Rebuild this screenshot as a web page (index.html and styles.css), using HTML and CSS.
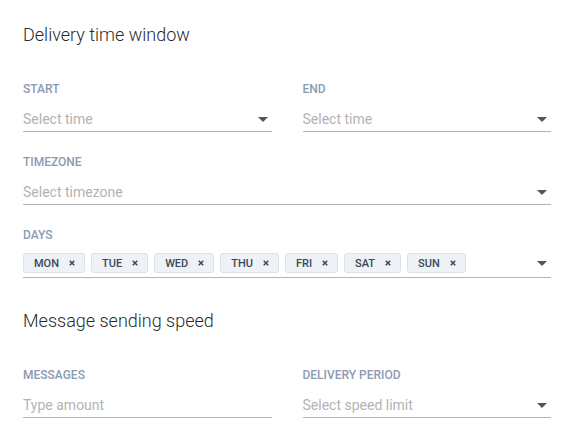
FILE: index.html
```html
<!DOCTYPE html>
<html>
<head>
<meta charset="utf-8">
<link rel="stylesheet" href="styles.css">
</head>
<body>
<div class="page">
  <h2 class="section-title">Delivery time window</h2>
  <div class="row two">
    <div class="field">
      <div class="label">Start</div>
      <div class="control select"><span class="placeholder">Select time</span><span class="caret"></span></div>
    </div>
    <div class="field">
      <div class="label">End</div>
      <div class="control select"><span class="placeholder">Select time</span><span class="caret"></span></div>
    </div>
  </div>
  <div class="row">
    <div class="field">
      <div class="label">Timezone</div>
      <div class="control select"><span class="placeholder">Select timezone</span><span class="caret"></span></div>
    </div>
  </div>
  <div class="row">
    <div class="field">
      <div class="label days-label">Days</div>
      <div class="control chips-control">
        <div class="chips">
          <span class="chip">MON<svg class="x" viewBox="0 0 8 8"><path d="M1 1L7 7M7 1L1 7"/></svg></span>
          <span class="chip">TUE<svg class="x" viewBox="0 0 8 8"><path d="M1 1L7 7M7 1L1 7"/></svg></span>
          <span class="chip">WED<svg class="x" viewBox="0 0 8 8"><path d="M1 1L7 7M7 1L1 7"/></svg></span>
          <span class="chip">THU<svg class="x" viewBox="0 0 8 8"><path d="M1 1L7 7M7 1L1 7"/></svg></span>
          <span class="chip">FRI<svg class="x" viewBox="0 0 8 8"><path d="M1 1L7 7M7 1L1 7"/></svg></span>
          <span class="chip">SAT<svg class="x" viewBox="0 0 8 8"><path d="M1 1L7 7M7 1L1 7"/></svg></span>
          <span class="chip">SUN<svg class="x" viewBox="0 0 8 8"><path d="M1 1L7 7M7 1L1 7"/></svg></span>
        </div>
        <span class="caret"></span>
      </div>
    </div>
  </div>
  <h2 class="section-title second">Message sending speed</h2>
  <div class="row two">
    <div class="field">
      <div class="label">Messages</div>
      <div class="control"><span class="placeholder">Type amount</span></div>
    </div>
    <div class="field">
      <div class="label">Delivery period</div>
      <div class="control select"><span class="placeholder">Select speed limit</span><span class="caret"></span></div>
    </div>
  </div>
</div>
</body>
</html>
```

FILE: styles.css
```css
html, body {
  margin: 0;
  padding: 0;
  background: #ffffff;
}
body {
  font-family: Roboto, "Liberation Sans", sans-serif;
}
.page {
  padding: 25px 29px 0 23px;
}
.section-title {
  margin: 0 0 38px 0;
  font-size: 18px;
  line-height: 20px;
  font-weight: 300;
  color: #2a2a2a;
}
.section-title.second {
  margin-top: 33px;
}
.row {
  display: flex;
  gap: 31px;
  margin-bottom: 24px;
}
.row.two .field {
  flex: 1 1 0;
}
.field {
  flex: 1 1 auto;
  min-width: 0;
}
.label {
  font-size: 12px;
  line-height: 13px;
  font-weight: 500;
  color: #8a9bb1;
  text-transform: uppercase;
  margin-bottom: 13px;
}
.days-label {
  margin-bottom: 11px;
}
.control {
  display: flex;
  align-items: center;
  justify-content: space-between;
  padding-bottom: 2px;
  border-bottom: 1px solid #b4b4b4;
}
.placeholder {
  font-size: 14px;
  line-height: 20px;
  color: #b3b3b3;
}
.caret {
  width: 0;
  height: 0;
  border-left: 5px solid transparent;
  border-right: 5px solid transparent;
  border-top: 5px solid #555555;
  margin-right: 4px;
}
.chips-control {
  padding-bottom: 4px;
}
.chips {
  display: flex;
  gap: 6px;
}
.chip {
  display: flex;
  align-items: center;
  height: 18px;
  padding: 0 9px 0 10px;
  gap: 10px;
  background: #eef1f5;
  border: 1px solid #dce1e7;
  border-radius: 3px;
  font-size: 11px;
  font-weight: 500;
  color: #3a4859;
}
.x {
  width: 6px;
  height: 6px;
  stroke: #3a4859;
  stroke-width: 2;
  fill: none;
}
```
